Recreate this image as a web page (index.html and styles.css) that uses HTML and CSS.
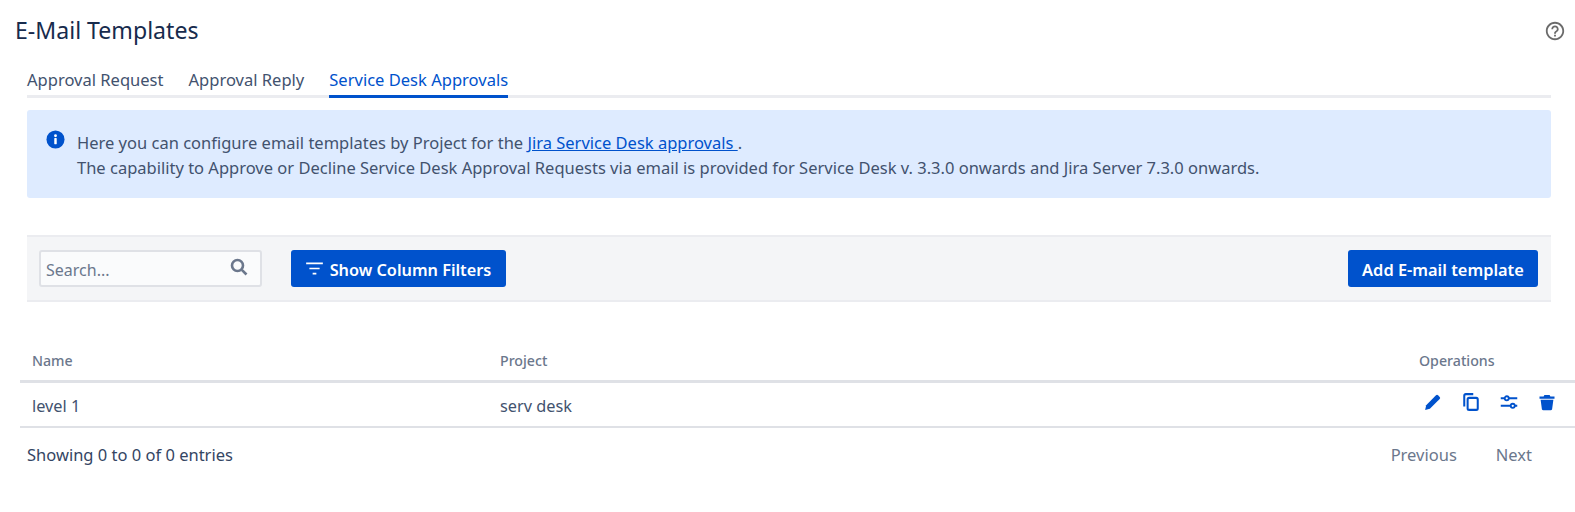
FILE: index.html
```html
<!DOCTYPE html>
<html lang="en">
<head>
<meta charset="utf-8">
<title>E-Mail Templates</title>
<link rel="stylesheet" href="styles.css">
</head>
<body>
<header class="page-head">
  <h1>E-Mail Templates</h1>
  <svg class="help" viewBox="0 0 24 24"><path d="M11 18h2v-2h-2v2zm1-16C6.48 2 2 6.48 2 12s4.48 10 10 10 10-4.48 10-10S17.52 2 12 2zm0 18c-4.41 0-8-3.59-8-8s3.59-8 8-8 8 3.59 8 8-3.59 8-8 8zm0-14c-2.21 0-4 1.790-4 4h2c0-1.100.9-2 2-2s2 .9 2 2c0 2-3 1.750-3 5h2c0-2.250 3-2.500 3-5 0-2.210-1.790-4-4-4z"/></svg>
</header>
<div class="content">
  <nav class="tabs">
    <a class="tab">Approval Request</a>
    <a class="tab">Approval Reply</a>
    <a class="tab active">Service Desk Approvals</a>
  </nav>
  <div class="notice">
    <svg class="notice-icon" viewBox="0 0 20 20"><circle cx="10" cy="10" r="9.500"/><rect class="i" x="8.700" y="8.500" width="2.600" height="6.500" rx=".5"/><circle class="i" cx="10" cy="6" r="1.500"/></svg>
    <p>Here you can configure email templates by Project for the <a href="#">Jira Service Desk approvals </a>.<br>The capability to Approve or Decline Service Desk Approval Requests via email is provided for Service Desk v. 3.3.0 onwards and Jira Server 7.3.0 onwards.</p>
  </div>
  <div class="toolbar">
    <div class="search">
      <span class="placeholder">Search...</span>
      <svg class="search-icon" viewBox="0 0 18 18"><circle cx="7.500" cy="7.500" r="5.500"/><path d="M11.800 11.800 16.500 16.500"/></svg>
    </div>
    <button class="btn filters">
      <svg class="filter-icon" viewBox="0 0 18 14"><path d="M0 1.500h18M3.500 7h11M7 12.500h4"/></svg>
      <span class="btn-label">Show Column Filters</span>
    </button>
    <button class="btn add"><span class="btn-label">Add E-mail template</span></button>
  </div>
</div>
<table class="grid">
  <thead>
    <tr><th class="c-name">Name</th><th class="c-project">Project</th><th class="c-ops">Operations</th></tr>
  </thead>
  <tbody>
    <tr>
      <td>level 1</td>
      <td>serv desk</td>
      <td class="ops">
        <span class="ops-icons">
          <svg viewBox="0 0 24 24"><path d="M1.500 22.500l1.400-6.300L16 3.100a2 2 0 0 1 2.800 0l2.100 2.100a2 2 0 0 1 0 2.800L7.800 21.100z"/></svg>
          <svg viewBox="0 0 24 24" class="copy"><rect x="7.500" y="6.500" width="13.500" height="16" rx="2"/><path d="M3 18V3.500A2 2 0 0 1 5 1.500h10"/></svg>
          <svg viewBox="0 0 24 24" class="tune"><path d="M1 7h5M12 7h11M1 17h13M20 17h3"/><circle cx="9" cy="7" r="2.700"/><circle cx="17" cy="17" r="2.700"/></svg>
          <svg viewBox="0 0 24 24"><path d="M8.500 2.500h7l1 2H22v3H2v-3h5.500zM3.500 9h17l-1.700 12.500a2 2 0 0 1-2 1.500H7.200a2 2 0 0 1-2-1.500z"/></svg>
        </span>
      </td>
    </tr>
  </tbody>
</table>
<footer class="foot">
  <span class="count">Showing 0 to 0 of 0 entries</span>
  <span class="pager"><a>Previous</a><a>Next</a></span>
</footer>
</body>
</html>
```
FILE: styles.css
```css
* { box-sizing: border-box; }
html, body { margin: 0; padding: 0; background: #fff; }
body {
  font-family: "Noto Sans", "Open Sans", sans-serif;
  font-size: 16.5px;
  color: #42526e;
  height: 512px;
  overflow: hidden;
}
.page-head {
  display: flex;
  justify-content: space-between;
  align-items: center;
  height: 61px;
  padding: 0 9px 0 15px;
}
h1 {
  margin: -2px 0 0;
  font-size: 23.1px;
  font-weight: 400;
  color: #172b4d;
}
.help { width: 22px; height: 22px; fill: #6b6b6b; }
.content { padding: 0 24px 0 27px; }
.tabs {
  display: flex;
  gap: 25px;
  height: 37px;
  border-bottom: 3px solid #ebecf0;
}
.tab {
  height: 37px;
  line-height: 37px;
  font-size: 16.55px;
  white-space: nowrap;
}
.tab.active {
  color: #0052cc;
  border-bottom: 3px solid #0052cc;
}
.notice {
  display: flex;
  gap: 12px;
  margin-top: 12px;
  height: 88px;
  padding: 20px 19px;
  background: #deebff;
  border-radius: 3px;
}
.notice p { margin: 0; line-height: 25px; font-size: 16.5px; white-space: nowrap; }
.notice a { color: #0052cc; text-decoration: underline; }
.notice-icon { width: 19px; height: 19px; flex: none; fill: #0052cc; }
.notice-icon .i { fill: #fff; }
.toolbar {
  display: flex;
  align-items: center;
  margin-top: 37px;
  height: 67px;
  padding: 0 13px 0 12px;
  background: #f4f5f7;
  border-top: 2px solid #ebecf0;
  border-bottom: 2px solid #ebecf0;
}
.search {
  display: flex;
  align-items: center;
  justify-content: space-between;
  width: 223px;
  height: 37px;
  padding: 0 12px 0 5px;
  background: #fafbfc;
  border: 2px solid #dfe1e6;
  border-radius: 3px;
}
.placeholder { color: #6b778c; font-size: 16px; margin-top: 2px; }
.search-icon { width: 18px; height: 18px; margin-top: -4px; fill: none; stroke: #6b778c; stroke-width: 2.600; }
.btn {
  display: inline-flex;
  align-items: center;
  justify-content: center;
  height: 37px;
  border: 0;
  border-radius: 3px;
  background: #0052cc;
  color: #fff;
  font: 600 16.4px "Noto Sans", sans-serif;
  white-space: nowrap;
}
.btn-label { margin-top: 2px; }
.filters { width: 215px; margin-left: 29px; gap: 7px; font-size: 16.3px; }
.filter-icon { width: 17px; height: 13px; fill: none; stroke: #fff; stroke-width: 1.800; }
.add { width: 190px; margin-left: auto; }
.grid {
  width: 1555px;
  margin: 40px 0 0 20px;
  border-collapse: collapse;
  table-layout: fixed;
}
.grid th {
  height: 39px;
  padding: 0 0 0 12px;
  text-align: left;
  font-size: 14.2px;
  font-weight: 500;
  color: #6b778c;
  border-bottom: 3px solid #dfe1e6;
}
.grid td {
  height: 46px;
  padding: 3px 0 0 12px;
  font-size: 16.3px;
  border-bottom: 2px solid #dfe1e6;
}
.grid .c-ops { padding-left: 11px; }
.c-name { width: 468px; }
.c-ops { width: 167px; }
.ops-icons {
  display: flex;
  gap: 20px;
  margin: -8px 0 0 4px;
  fill: #0052cc;
}
.ops-icons svg { width: 18px; height: 18px; }
.ops-icons .copy { fill: none; stroke: #0052cc; stroke-width: 2.700; }
.ops-icons .tune { fill: #fff; stroke: #0052cc; stroke-width: 2.400; }
.foot {
  display: flex;
  justify-content: space-between;
  align-items: center;
  height: 52px;
  padding: 0 43px 0 27px;
  color: #344563;
}
.pager { display: flex; gap: 39px; color: #6b778c; }
```
